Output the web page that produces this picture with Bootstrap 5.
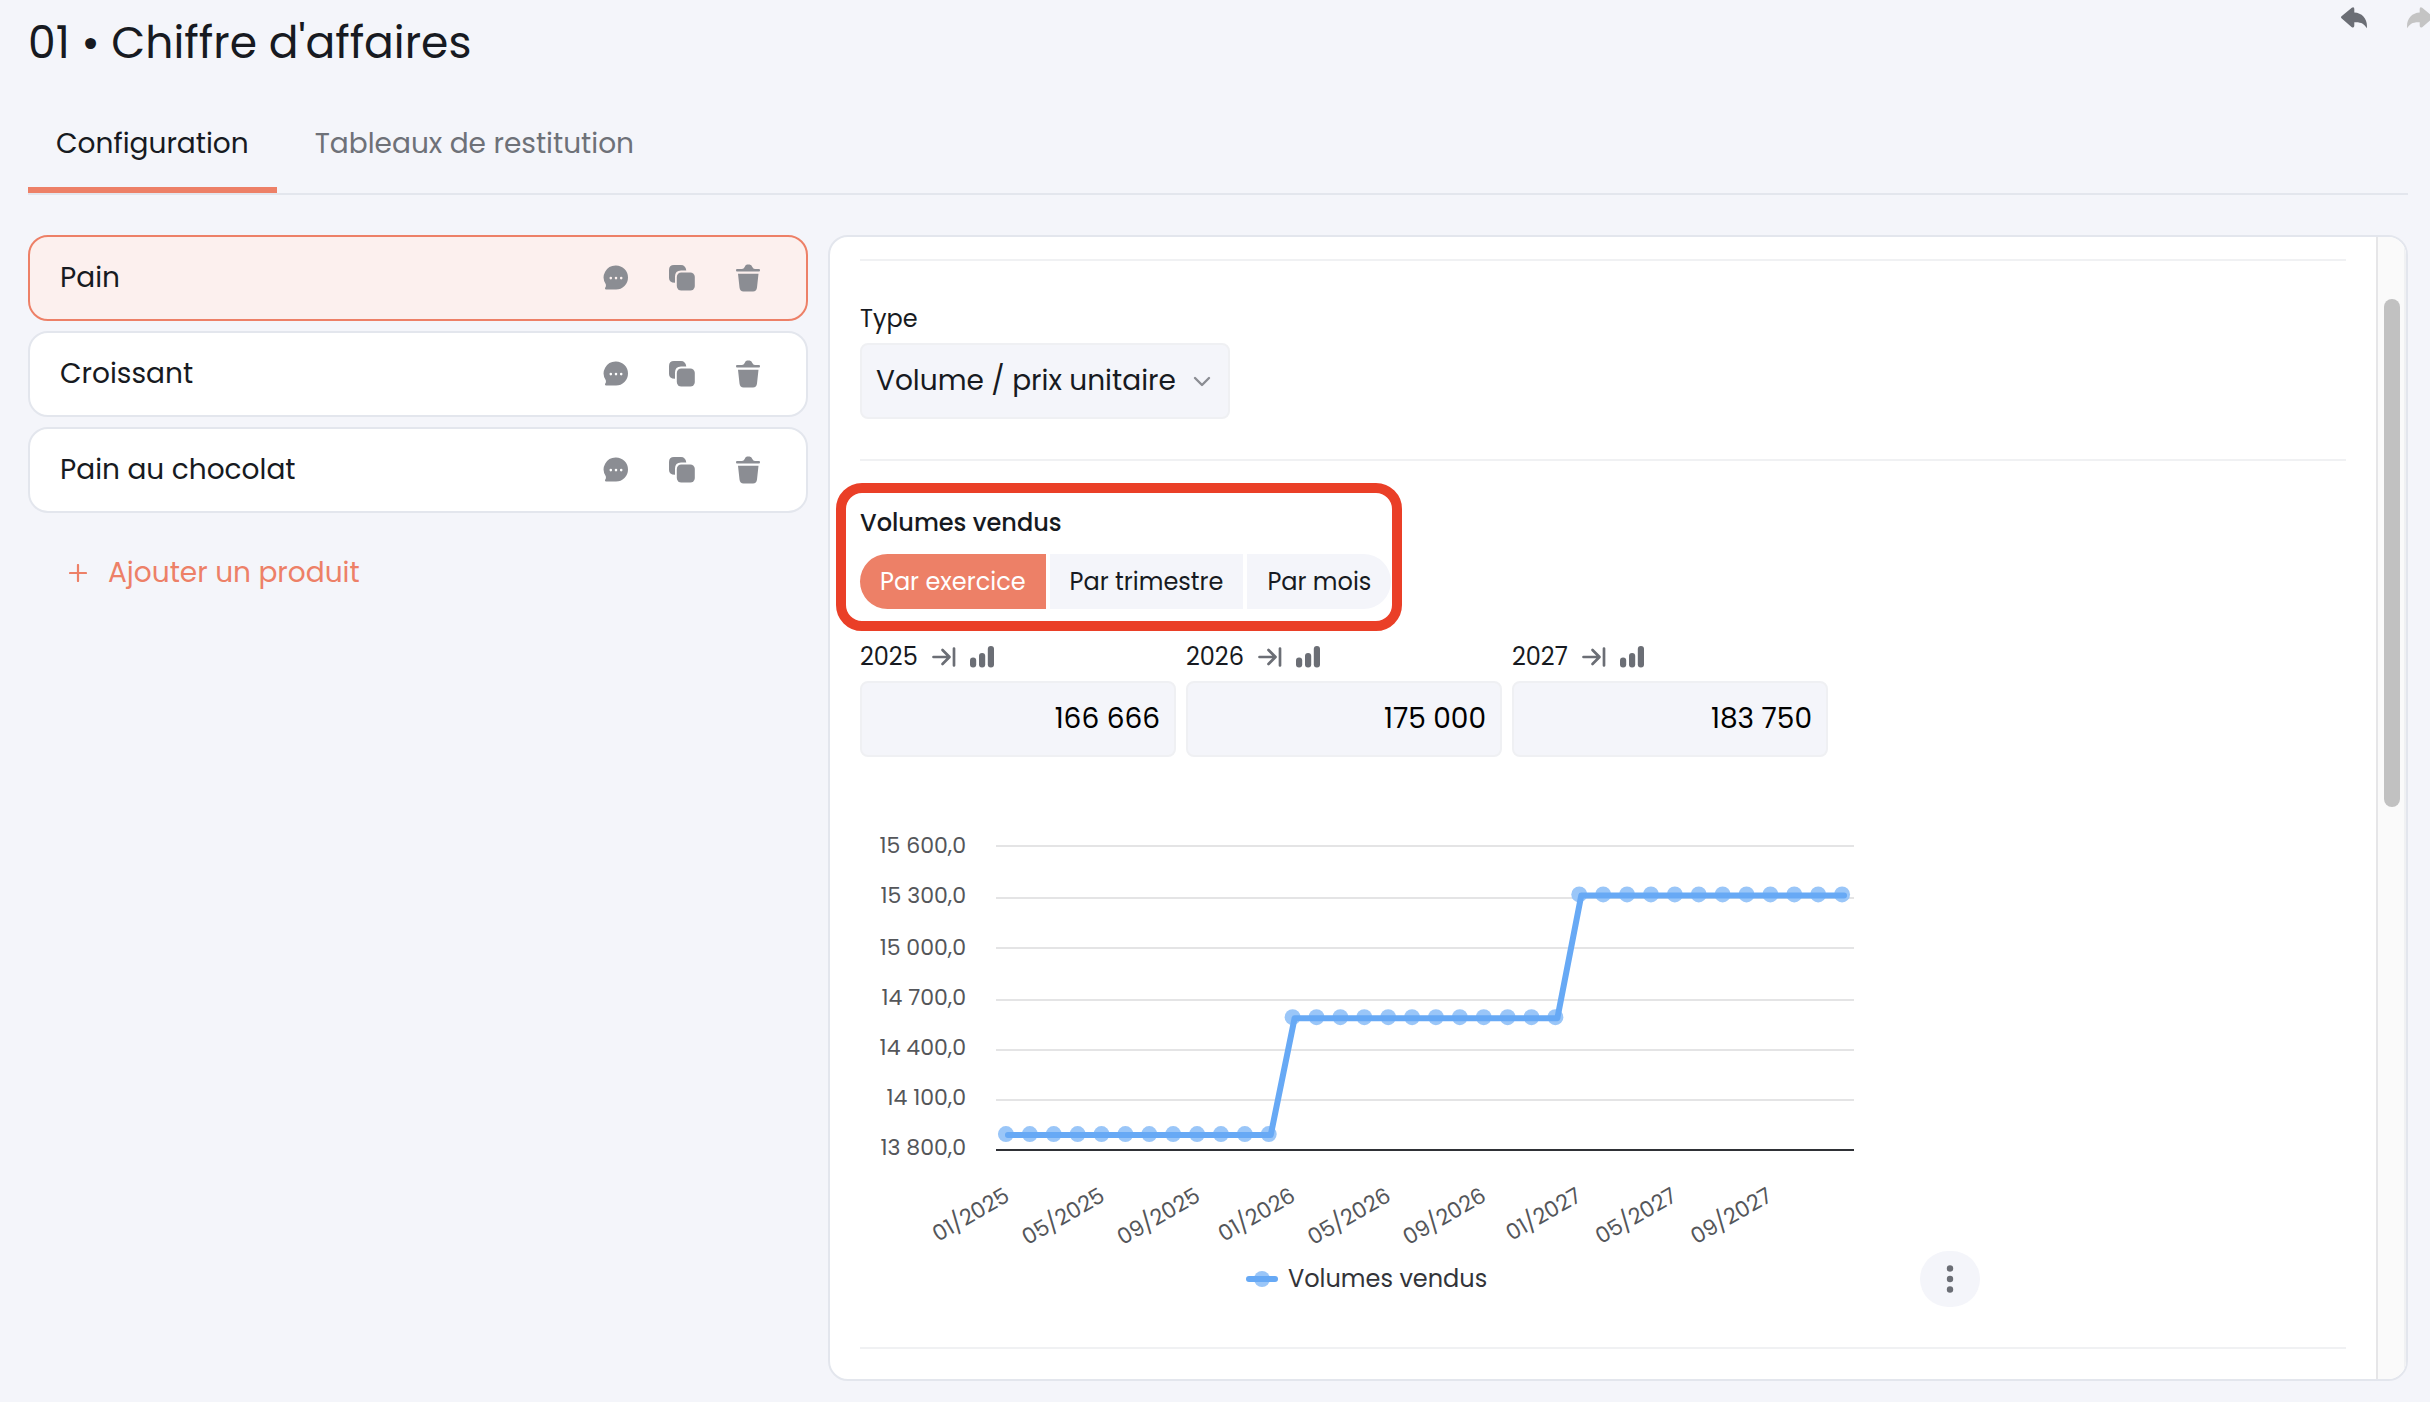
<!DOCTYPE html>
<html lang="fr">
<head>
<meta charset="utf-8">
<meta name="viewport" content="width=device-width, initial-scale=1">
<title>Chiffre d'affaires</title>
<link href="https://cdn.jsdelivr.net/npm/bootstrap@5.3.0/dist/css/bootstrap.min.css" rel="stylesheet">
<style>
:root{--coral:#ed8067;--ink:#171a21;--soft:#f4f5fa;--edge:#e3e6ed;--hair:#f0f1f3;--icon:#8b8d93}
body{font-family:Poppins,Inter,sans-serif;background:var(--soft);color:var(--ink);font-size:28px;line-height:40px}
.app-shell{min-height:100vh;padding:0 22px 21px 28px}
.top-bar{margin-right:-22px;height:84px;overflow:hidden}
.page-title{font-size:44px;line-height:60px;font-weight:400;padding-top:13px}
.history{gap:40px;padding-top:7px;margin-right:-3px}
.history svg{width:26px;height:22px;display:block}
.history .undo{color:#6b6e75}
.history .redo{color:#c4c4c4}
.main-tabs{border-bottom:2px solid var(--edge);height:111px;padding-top:37px}
.main-tabs .nav-link{padding:1px 28px 28px;color:#6e7178;font-size:28px;line-height:44px;height:72px;border-bottom:6px solid transparent;border-radius:0}
.main-tabs .nav-link.active{color:var(--ink);border-color:var(--coral)}
.main-tabs .nav-link + .nav-link{margin-left:10px}
.work-area{--bs-gutter-x:20px;padding-top:40px}
.stack{gap:10px}
.product{height:86px;border:2px solid var(--edge);border-radius:20px;background:#fff;padding:0 44px 0 30px}
.product.active{background:#fcf0ee;border-color:var(--coral)}
.icon-set{gap:38px;color:var(--icon)}
.icon-set svg{width:28px;height:28px;display:block}
.bare{background:none;border:0;padding:0;color:inherit;display:block}
.add-link{color:var(--coral);gap:21px;padding:40px 0 0 41px}
.panel-box{border:2px solid var(--edge);border-radius:20px;background:#fff;overflow:hidden}
.panel-body{padding:22px 30px 0}
.sep{border-top:2px solid var(--hair)}
.type-block{height:198px;padding-top:40px}
.small-label{font-size:24px;line-height:36px}
.type-pick{width:370px;height:76px;margin-top:6px;background-color:var(--soft);border:2px solid #eff0f3;border-radius:8px;font-size:28px;padding:0 50px 0 14px;color:var(--ink);background-position:right 17px center;background-size:18px 18px;--bs-form-select-bg-img:url("data:image/svg+xml,%3csvg xmlns='http://www.w3.org/2000/svg' viewBox='0 0 18 18'%3e%3cpath d='M2 6l7 7 7-7' fill='none' stroke='%238b8d93' stroke-width='2.4' stroke-linecap='round' stroke-linejoin='round'/%3e%3c/svg%3e")}
.period-wrap{padding-top:44px}
.period-block{padding-bottom:22px}
.callout-ring{inset:-22px -11px 0 -24px;border:10px solid #ea3f27;border-radius:26px;pointer-events:none}
.period{gap:4px;margin-top:13px}
.period button{border:0;background:var(--soft);color:var(--ink);font-size:24px;line-height:36px;padding:10px 20px 9px}
.period button.active{background:var(--coral);color:#fff}
.period button:first-child{border-radius:28px 0 0 28px}
.period button:last-child{border-radius:0 28px 28px 0}
.year-col{width:316px}
.year-head{height:50px;gap:14px;padding-top:2px;color:#6b6e75}
.year-head label{color:var(--ink);font-size:24px;line-height:36px}
.year-head svg{width:24px;height:24px;display:block}
.amount{height:76px;background:var(--soft);border:2px solid #eff0f3;border-radius:8px;font-size:28px;padding:0 14px;color:#000;text-align:right}
.chart-row{margin-top:63px;gap:60px}
.chart{width:1000px;height:auto;display:block;font-size:22px}
.kebab{width:60px;height:56px;border-radius:30px;background:var(--soft);border:0;padding:0;color:#6b6e75}
.last-sep{margin-top:40px}
.track{width:30px;background:#fafafa;border-left:2px solid #e6e6e8;border-right:2px solid #f0f1f3;padding:62px 4px 0 6px}
.thumb{height:47%;border-radius:8px;background:#c1c1c1}
</style>
</head>
<body>
<svg class="d-none" aria-hidden="true">
<symbol id="i-chat" viewBox="0 0 28 28"><path fill="currentColor" fill-rule="evenodd" d="M14 1.500a12 12 0 0 1 0 24H4.200C3 25.500 2.500 24 3.500 23.200 4 22.700 4 22 3.800 20.300A12 12 0 0 1 14 1.500ZM8.800 12.800a1.300 1.300 0 1 0 0 2.600 1.300 1.300 0 0 0 0-2.600Zm5.200 0a1.300 1.300 0 1 0 0 2.600 1.300 1.300 0 0 0 0-2.600Zm5.200 0a1.300 1.300 0 1 0 0 2.600 1.300 1.300 0 0 0 0-2.600Z"/></symbol>
<symbol id="i-copy" viewBox="0 0 28 28"><g fill="currentColor"><path d="M6 1h7q4.500 0 5.300 5.500H13Q7 6.500 7 12.500v6.300Q1 18.500 1 14V6q0-5 5-5Z"/><rect x="8.800" y="8.500" width="18" height="18" rx="4.500"/></g></symbol>
<symbol id="i-trash" viewBox="0 0 28 28"><path fill="currentColor" d="M3 5h5q1.800 0 2.500-1.800Q11.500.5 13 .5h2.500q2 0 3 2.700Q19 5 21 5h4q1 0 1 1.300T25 7.600H3Q2 7.600 2 6.300T3 5ZM4 9.800h20.500L23 23.500q-.5 4-4 4H9.500q-3.500 0-4-4Z"/></symbol>
<symbol id="i-fill" viewBox="0 0 24 24"><path d="M1.500 12h15M10.500 5l7 7-7 7M22 3.500v17" fill="none" stroke="currentColor" stroke-width="2.700" stroke-linecap="round" stroke-linejoin="round"/></symbol>
<symbol id="i-bars" viewBox="0 0 24 24"><g fill="currentColor"><rect x="0" y="12.500" width="6.200" height="10" rx="3"/><rect x="9" y="8" width="6.200" height="14.500" rx="3"/><rect x="17.800" y="1" width="6.200" height="21.500" rx="3"/></g></symbol>
<symbol id="i-undo" viewBox="0 0 26 22"><path fill="currentColor" d="M.5 9.200 10.800.7Q13.300-.5 13.300 2v3.500C21.500 5.800 27 12.500 25.800 21.300 23.500 16.800 20 14.800 13.300 15.200V18.500Q13.300 21.500 10.500 20L.5 11.300Q-.5 10.200.5 9.200Z"/></symbol>
</svg>

<div class="app-shell d-flex flex-column overflow-hidden">
  <header class="top-bar d-flex justify-content-between">
    <h1 class="page-title m-0">01 • Chiffre d'affaires</h1>
    <div class="history d-flex align-items-start">
      <button class="bare undo" aria-label="Annuler"><svg><use href="#i-undo"/></svg></button>
      <button class="bare redo" aria-label="Rétablir"><svg viewBox="0 0 26 22"><use href="#i-undo" width="26" height="22" transform="matrix(-1 0 0 1 26 0)"/></svg></button>
    </div>
  </header>
  <nav class="main-tabs nav">
    <a class="nav-link active" href="#config">Configuration</a>
    <a class="nav-link" href="#tableaux">Tableaux de restitution</a>
  </nav>

  <main class="work-area row flex-grow-1">
    <div class="col-4">
      <div class="stack d-flex flex-column" id="products"></div>
      <a href="#ajouter" class="add-link d-flex align-items-center text-decoration-none"><svg width="18" height="18" viewBox="0 0 18 18"><path d="M9 1v16M1 9h16" stroke="currentColor" stroke-width="2.200" stroke-linecap="round"/></svg>Ajouter un produit</a>
    </div>

    <div class="col-8 d-flex">
      <section class="panel-box d-flex flex-grow-1">
        <div class="panel-body flex-grow-1">
          <div class="sep"></div>
          <div class="type-block d-flex flex-column align-items-start">
            <label class="small-label" for="kind">Type</label>
            <select id="kind" class="form-select type-pick"><option>Volume / prix unitaire</option></select>
          </div>
          <div class="sep"></div>

          <div class="period-wrap d-flex">
            <div class="period-block position-relative">
              <div class="small-label fw-medium">Volumes vendus</div>
              <div class="period d-flex" role="group" aria-label="Période">
                <button type="button" class="active">Par exercice</button>
                <button type="button">Par trimestre</button>
                <button type="button">Par mois</button>
              </div>
              <div class="callout-ring position-absolute"></div>
            </div>
          </div>
          <div class="stack d-flex" id="years"></div>

          <div class="chart-row d-flex align-items-end">
            <svg class="chart" viewBox="860 820 1000 487" role="img" aria-label="Volumes vendus" id="chart"></svg>
            <button class="kebab" type="button" aria-label="Plus d'options"><svg class="d-block" width="60" height="56" viewBox="0 0 60 56" fill="currentColor"><circle cx="30" cy="17.500" r="3.200"/><circle cx="30" cy="28" r="3.200"/><circle cx="30" cy="38.500" r="3.200"/></svg></button>
          </div>
          <div class="sep last-sep"></div>
        </div>
        <div class="track flex-shrink-0"><div class="thumb"></div></div>
      </section>
    </div>
  </main>
</div>

<script src="https://cdn.jsdelivr.net/npm/bootstrap@5.3.0/dist/js/bootstrap.bundle.min.js"></script>
<script>
const icon = id => `<svg><use href="#${id}"/></svg>`;
document.getElementById('products').innerHTML = ['Pain', 'Croissant', 'Pain au chocolat'].map((n, i) => `
  <div class="product d-flex align-items-center justify-content-between${i ? '' : ' active'}">
    <span>${n}</span>
    <div class="icon-set d-flex">
      <button class="bare" aria-label="Commenter ${n}">${icon('i-chat')}</button>
      <button class="bare" aria-label="Dupliquer ${n}">${icon('i-copy')}</button>
      <button class="bare" aria-label="Supprimer ${n}">${icon('i-trash')}</button>
    </div>
  </div>`).join('');

document.getElementById('years').innerHTML = [['2025', '166 666'], ['2026', '175 000'], ['2027', '183 750']].map(([y, v]) => `
  <div class="year-col">
    <div class="year-head d-flex align-items-center">
      <label for="y${y}">${y}</label>
      <button class="bare" aria-label="Recopier ${y}">${icon('i-fill')}</button>
      <button class="bare" aria-label="Graphique ${y}">${icon('i-bars')}</button>
    </div>
    <input id="y${y}" class="form-control amount" value="${v}">
  </div>`).join('');

// Chart: 36 months, one level per year
const left = 996, right = 1854, top0 = 847, base = 1150, step = 860 / 36;
const py = v => base - (v - 13800) / 1800 * (base - top0);
let s = '';
const rows = [['15 600,0', 846, 853], ['15 300,0', 898, 903], ['15 000,0', 948, 955], ['14 700,0', 1000, 1005], ['14 400,0', 1050, 1055], ['14 100,0', 1100, 1105], ['13 800,0', 1150, 1155]];
rows.forEach(([t, y, ty], i) => {
  s += `<line x1="${left}" x2="${right}" y1="${y}" y2="${y}" stroke="${i === 6 ? '#2f3136' : '#e4e4e5'}" stroke-width="2"/>`;
  s += `<text x="966" y="${ty}" text-anchor="end" fill="#54565a">${t}</text>`;
});
const pts = Array.from({length: 36}, (_, k) => [left + step * (k + .5), py([166666, 175000, 183750][Math.floor(k / 12)] / 12)]);
s += pts.map(p => `<circle cx="${p[0] - 2}" cy="${p[1] - 1}" r="8" fill="#9ac6f8"/>`).join('');
s += `<polyline points="${pts.map(p => p.join()).join(' ')}" fill="none" stroke="#67a9f5" stroke-width="6" stroke-linejoin="round" stroke-linecap="round"/>`;
for (let k = 0; k < 36; k += 4) {
  const t = String(k % 12 + 1).padStart(2, '0') + '/' + (2025 + Math.floor(k / 12));
  s += `<text transform="translate(${1011 + k * 23.83} 1200) rotate(-30)" text-anchor="end" fill="#54565a">${t}</text>`;
}
s += `<circle cx="1262" cy="1279" r="8" fill="#9ac6f8"/><line x1="1249" x2="1275" y1="1279" y2="1279" stroke="#67a9f5" stroke-width="6" stroke-linecap="round"/>`;
s += `<text x="1288" y="1287" font-size="24" fill="#333439">Volumes vendus</text>`;
document.getElementById('chart').innerHTML = s;
</script>
</body>
</html>
